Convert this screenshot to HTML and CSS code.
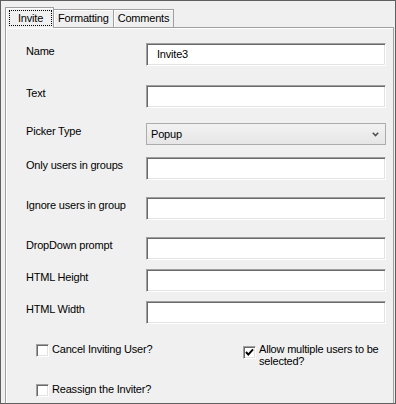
FILE: index.html
```html
<!DOCTYPE html>
<html lang="en">
<head>
    <meta charset="UTF-8">
    <title>Invite properties</title>
    <link rel="stylesheet" href="styles.css">
</head>
<body>
    <div class="window">
        <div class="tabs">
            <div class="tab active"><span class="focus">Invite</span></div>
            <div class="tab">Formatting</div>
            <div class="tab">Comments</div>
        </div>

        <div class="panel">
            <div class="form">
                <div class="row"><span class="label">Name</span><div class="field">Invite3</div></div>
                <div class="row"><span class="label">Text</span><div class="field"></div></div>
                <div class="row">
                    <span class="label">Picker Type</span>
                    <div class="select">
                        <span>Popup</span>
                        <svg class="chevron" width="7" height="5" viewBox="0 0 7 5">
                            <path d="M0.8 0.8 L3.5 3.6 L6.2 0.8" fill="none" stroke="#505050" stroke-width="1.6"/>
                        </svg>
                    </div>
                </div>
                <div class="row"><span class="label">Only users in groups</span><div class="field"></div></div>
                <div class="row"><span class="label">Ignore users in group</span><div class="field"></div></div>
                <div class="row"><span class="label">DropDown prompt</span><div class="field"></div></div>
                <div class="row"><span class="label">HTML Height</span><div class="field"></div></div>
                <div class="row"><span class="label">HTML Width</span><div class="field"></div></div>
            </div>

            <div class="checks">
                <div class="check">
                    <span class="box"></span>
                    <span class="check-text">Cancel Inviting User?</span>
                </div>
                <div class="check two-lines">
                    <span class="box">
                        <svg width="9" height="9" viewBox="0 0 9 9">
                            <path d="M1 4 L3.3 6.6 L8 1.4" fill="none" stroke="#000" stroke-width="2"/>
                        </svg>
                    </span>
                    <span class="check-text">Allow multiple users to be<br>selected?</span>
                </div>
                <div class="check">
                    <span class="box"></span>
                    <span class="check-text">Reassign the Inviter?</span>
                </div>
            </div>
        </div>
    </div>
</body>
</html>
```

FILE: styles.css
```css
body {
    margin: 0;
    font-family: 'Liberation Sans', Arial, sans-serif;
    font-size: 11px;
    letter-spacing: -0.2px;
    color: #000;
}
.window {
    width: 396px;
    height: 404px;
    box-sizing: border-box;
    border: 1px solid #5f5f5f;
    background: #f0f0f0;
    overflow: hidden;
    display: flex;
    flex-direction: column;
}

/* tab strip */
.tabs {
    height: 26px;
    display: flex;
    align-items: flex-end;
    padding-left: 4px;
}
.tab {
    height: 18px;
    box-sizing: border-box;
    padding: 2px 4px 0 4px;
    line-height: 13px;
    border: 1px solid #a0a0a0;
    border-bottom: none;
    box-shadow: inset 1px 1px 0 #fff;
    background: #f0f0f0;
}
.tab + .tab {
    margin-left: -1px;
}
.tab.active {
    height: 21px;
    margin-bottom: -1px;
    padding: 2px 1px 0 3px;
    position: relative;
    z-index: 1;
}
.focus {
    display: block;
    height: 16px;
    box-sizing: border-box;
    padding: 0 8px;
    line-height: 14px;
    border: 1px dotted #000;
}

/* tab page */
.panel {
    flex: 1;
    margin: 0 1px 0 4px;
    border: 1px solid #a0a0a0;
    border-bottom: none;
    box-shadow: inset 1px 1px 0 #fff;
}
.form {
    display: grid;
    grid-template-columns: 120px 240px;
    grid-template-rows: 42px 38px 34px 40px 40px 32px 32px 32px;
    padding: 15px 0 0 20px;
}
.row {
    display: contents;
}
.label {
    padding-top: 2px;
    line-height: 13px;
    white-space: nowrap;
}
.field {
    height: 23px;
    box-sizing: border-box;
    padding-left: 10px;
    line-height: 21px;
    background: #fff;
    border: 1px solid;
    border-color: #a0a0a0 #fff #fff #a0a0a0;
    box-shadow: inset 1px 1px 0 #696969, inset -1px -1px 0 #e3e3e3;
}
.select {
    height: 22px;
    box-sizing: border-box;
    display: flex;
    align-items: center;
    justify-content: space-between;
    padding: 0 6px 0 4px;
    border: 1px solid #acacac;
    background: linear-gradient(#f2f2f2, #e6e6e6);
}
.chevron {
    margin-top: 1px;
}

/* checkbox block */
.checks {
    display: grid;
    grid-template-columns: 207px 1fr;
    grid-template-rows: 40px auto;
    padding: 10px 0 0 30px;
}
.check {
    display: flex;
    align-items: flex-start;
    gap: 3px;
}
.check-text {
    line-height: 13px;
}
.box {
    width: 13px;
    height: 13px;
    margin-top: 1px;
    box-sizing: border-box;
    flex-shrink: 0;
    display: flex;
    align-items: center;
    justify-content: center;
    background: #fff;
    border: 1px solid;
    border-color: #a0a0a0 #fff #fff #a0a0a0;
    box-shadow: inset 1px 1px 0 #696969, inset -1px -1px 0 #e3e3e3;
}
.two-lines .check-text {
    line-height: 12px;
}
.two-lines .box {
    margin-top: 3px;
}
```
